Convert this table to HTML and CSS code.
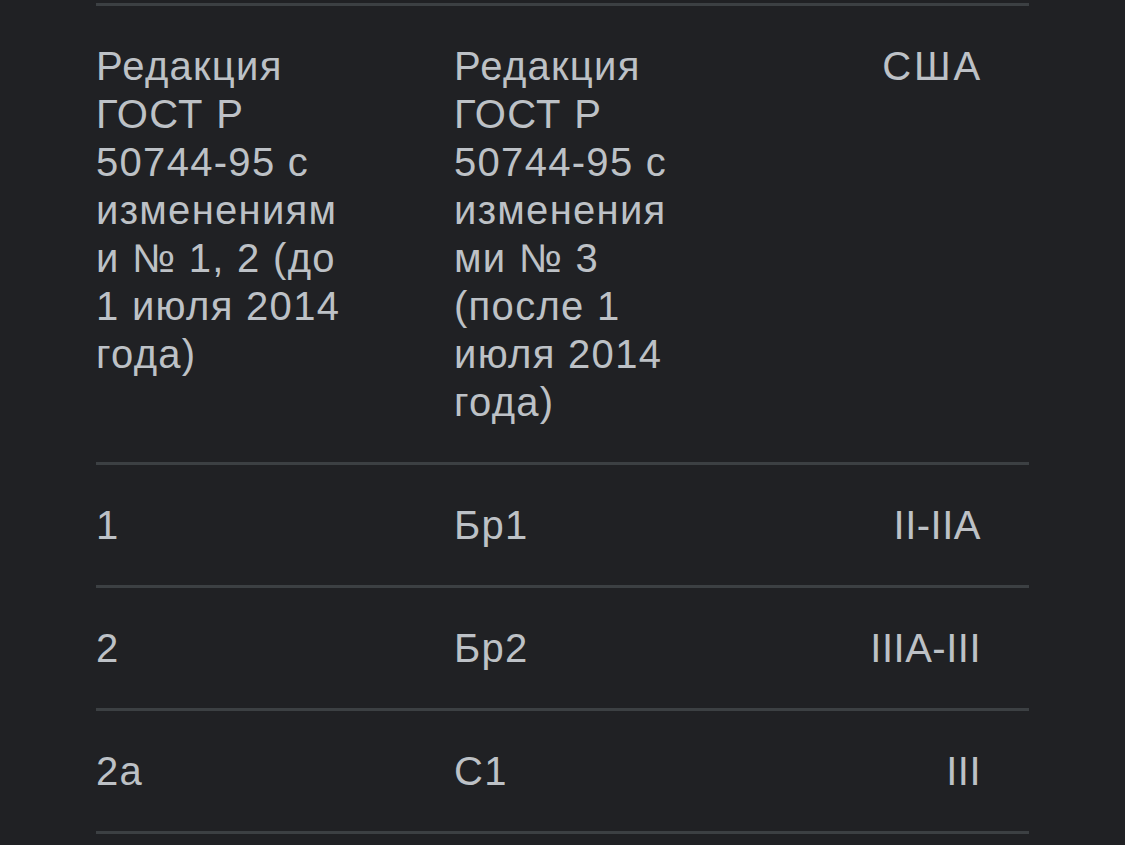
FILE: index.html
```html
<!DOCTYPE html>
<html lang="ru">
<head>
<meta charset="utf-8">
<link rel="stylesheet" href="styles.css">
</head>
<body>
<div class="table">
  <div class="row head">
    <div class="cell c1"><div class="txt w1">Редакция ГОСТ Р 50744-95 с изменениями № 1, 2 (до 1 июля 2014 года)</div></div>
    <div class="cell c2"><div class="txt w2">Редакция ГОСТ Р 50744-95 с изменениями № 3 (после 1 июля 2014 года)</div></div>
    <div class="cell c3 wide">США</div>
  </div>
  <div class="row">
    <div class="cell c1">1</div>
    <div class="cell c2">Бр1</div>
    <div class="cell c3 roman">II-IIA</div>
  </div>
  <div class="row">
    <div class="cell c1">2</div>
    <div class="cell c2">Бр2</div>
    <div class="cell c3 roman">IIIA-III</div>
  </div>
  <div class="row">
    <div class="cell c1">2а</div>
    <div class="cell c2">С1</div>
    <div class="cell c3 roman">III</div>
  </div>
</div>
</body>
</html>
```
FILE: styles.css
```css
html, body {
  margin: 0;
  background: #202124;
}
body {
  padding: 3px 96px 0;
  font-family: "Liberation Sans", Arial, sans-serif;
  font-size: 40px;
  line-height: 48px;
  letter-spacing: 1.3px;
  color: #bdc1c6;
}
.table {
  border-top: 3px solid #3c4043;
}
.row {
  display: grid;
  grid-template-columns: 359px 359px 1fr;
  border-bottom: 3px solid #3c4043;
}
.cell {
  padding: 36px 0;
}
.c2 {
  margin-left: -1px;
}
.c3 {
  text-align: right;
  padding-right: 47px;
}
.c3.roman {
  letter-spacing: 0.5px;
  padding-right: 48px;
}
.c3.wide {
  letter-spacing: 2.8px;
  padding-right: 46px;
}
.txt {
  overflow-wrap: anywhere;
}
.w1 { width: 254px; }
.w2 { width: 240px; }
```
